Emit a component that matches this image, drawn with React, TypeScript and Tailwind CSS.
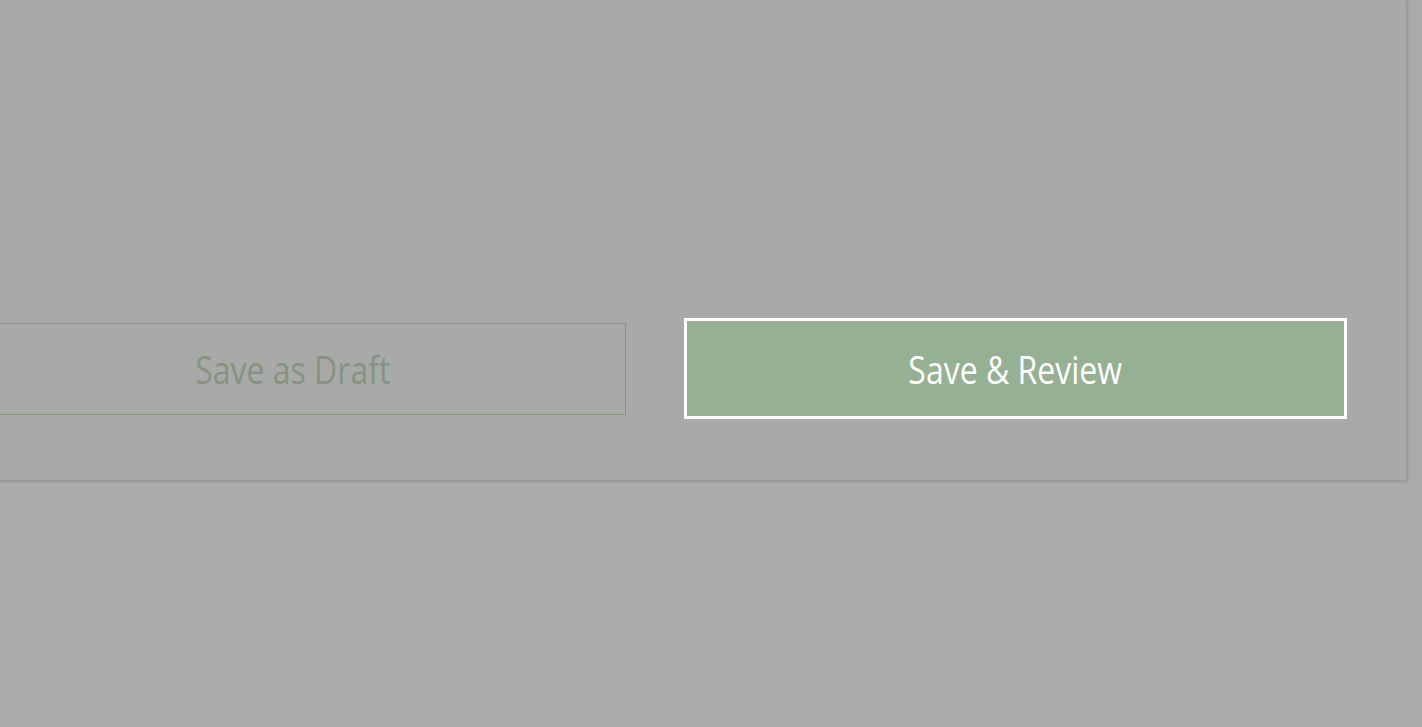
export default function App() {
  return (
    <div className="w-full h-[727px] bg-[#aaaaaa] overflow-hidden font-['Open_Sans',sans-serif]">
      <div className="ml-[-40px] w-[1447px] h-[481px] bg-[#a9a9a9] border-r border-b border-[#979797] shadow-[1px_1px_2px_rgba(0,0,0,0.12)] flex flex-col justify-end pb-[61px] pr-[59px]">
        <div className="flex items-center">
          <button className="w-[666px] h-[92px] border border-[#84957f] text-[#84947f] text-[32px] font-medium flex items-center justify-center pt-[3px]">
            <span className="inline-block scale-y-[1.18]">Save as Draft</span>
          </button>
          <button className="ml-[58px] w-[664px] h-[101px] border-[3px] border-white bg-[#95b092] text-white text-[32px] font-medium flex items-center justify-center pt-[3px]">
            <span className="inline-block scale-y-[1.18]">Save &amp; Review</span>
          </button>
        </div>
      </div>
    </div>
  );
}
